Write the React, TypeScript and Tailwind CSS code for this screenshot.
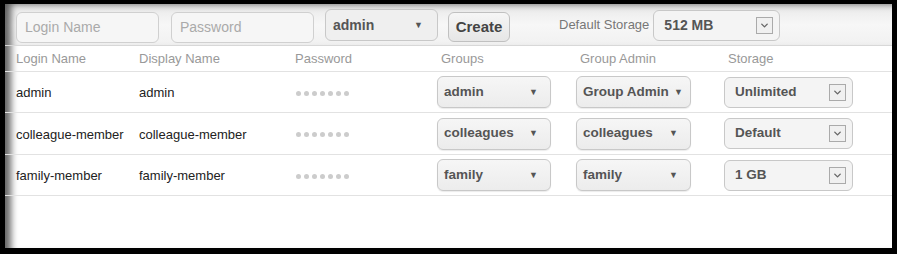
import { ChevronDown } from 'lucide-react';

const users = [
  { login: 'admin', display: 'admin', group: 'admin', admin: 'Group Admin', storage: 'Unlimited', h: 'h-[41px]' },
  { login: 'colleague-member', display: 'colleague-member', group: 'colleagues', admin: 'colleagues', storage: 'Default', h: 'h-[42px]' },
  { login: 'family-member', display: 'family-member', group: 'family', admin: 'family', storage: '1 GB', h: 'h-[41px]' },
];

const Caret = () => <span className="text-[9px] text-[#555] leading-none">▼</span>;

const DropSelect = ({ value, width, tight }: { value: string; width: string; tight?: boolean }) => (
  <div
    className={`${width} ${tight ? 'pr-[7px]' : 'pr-[12px]'} h-[32px] flex items-center justify-between pl-[6px] rounded-[6px] border border-[#c8c8c8] bg-gradient-to-b from-[#f6f6f6] to-[#ececec] text-[13.5px] font-bold text-[#555] whitespace-nowrap shadow-[0_1px_1px_rgba(0,0,0,0.08)]`}
  >
    <span>{value}</span>
    <Caret />
  </div>
);

const BoxSelect = ({ value, width }: { value: string; width: string }) => (
  <div
    className={`${width} h-[31px] flex items-center justify-between pl-[10px] pr-[6px] rounded-[6px] border border-[#c8c8c8] bg-[#f4f4f4] text-[13.5px] font-bold text-[#555]`}
  >
    <span>{value}</span>
    <span className="w-[17px] h-[17px] flex items-center justify-center border border-[#aaa] bg-[#f0f0f0]">
      <ChevronDown size={11} strokeWidth={3} className="text-[#666]" />
    </span>
  </div>
);

export default function App() {
  return (
    <div
      className="w-[897px] h-[254px] bg-black pt-[4px] pl-[5px] pr-[5px] pb-[6px]"
      style={{ fontFamily: '"Liberation Sans", Arial, sans-serif' }}
    >
      <div className="h-full bg-white shadow-[inset_9px_3px_7px_-3px_rgba(0,0,0,0.6)] overflow-hidden">
        <div className="h-[42px] flex items-center pl-[11px] border-b border-[#d8d8d8] bg-gradient-to-b from-[#e8e8e8] via-[#f7f7f7] to-[#f1f1f1] shadow-[inset_9px_3px_7px_-3px_rgba(0,0,0,0.6)]">
          <div className="w-[143px] h-[31px] flex items-center px-[8px] rounded-[6px] border border-[#d0d0d0] bg-[#f6f6f6] text-[14px] text-[#aaa] mt-[5px]">
            Login Name
          </div>
          <div className="w-[143px] h-[31px] ml-[12px] flex items-center px-[8px] rounded-[6px] border border-[#d0d0d0] bg-[#f6f6f6] text-[14px] text-[#aaa] mt-[5px]">
            Password
          </div>
          <div className="w-[113px] h-[32px] ml-[11px] mt-[1px] flex items-center justify-between pl-[7px] pr-[14px] rounded-[6px] border border-[#c8c8c8] bg-[#efefef] text-[14px] font-bold text-[#555]">
            <span>admin</span>
            <Caret />
          </div>
          <div className="w-[62px] h-[30px] ml-[10px] mt-[5px] flex items-center justify-center rounded-[6px] border border-[#c0c0c0] bg-gradient-to-b from-[#f6f6f6] to-[#e6e6e6] text-[15px] font-bold text-[#444]">
            Create
          </div>
          <div className="ml-[49px] mt-[1px] text-[13px] text-[#777]">Default Storage</div>
          <div className="w-[127px] h-[31px] ml-[4px] mt-[2px] flex items-center justify-between pl-[10px] pr-[6px] rounded-[6px] border border-[#c8c8c8] bg-[#f4f4f4] text-[14px] font-bold text-[#555]">
            <span>512 MB</span>
            <span className="w-[17px] h-[17px] flex items-center justify-center border border-[#aaa] bg-[#f0f0f0]">
              <ChevronDown size={11} strokeWidth={3} className="text-[#666]" />
            </span>
          </div>
        </div>

        <div className="grid grid-cols-[123px_156px_146px_139px_148px_1fr] h-[26px] items-center pl-[11px] pt-[1px] border-b border-[#e2e2e2] text-[13px] text-[#999]">
          <div>Login Name</div>
          <div>Display Name</div>
          <div>Password</div>
          <div>Groups</div>
          <div>Group Admin</div>
          <div>Storage</div>
        </div>

        {users.map((u) => (
          <div
            key={u.login}
            className={`grid grid-cols-[123px_156px_142px_139px_148px_1fr] ${u.h} items-center pl-[11px] border-b border-[#e2e2e2] text-[13px] text-[#222]`}
          >
            <div className="pt-[2px]">{u.login}</div>
            <div className="pt-[2px]">{u.display}</div>
            <div className="flex gap-[3px] pl-[1px] pt-[2px]">
              {Array.from({ length: 7 }).map((_, i) => (
                <span key={i} className="w-[5px] h-[5px] rounded-full bg-[#ccc]" />
              ))}
            </div>
            <DropSelect value={u.group} width="w-[114px]" />
            <DropSelect value={u.admin} width="w-[115px]" tight={u.admin === 'Group Admin'} />
            <BoxSelect value={u.storage} width="w-[129px]" />
          </div>
        ))}
      </div>
    </div>
  );
}
